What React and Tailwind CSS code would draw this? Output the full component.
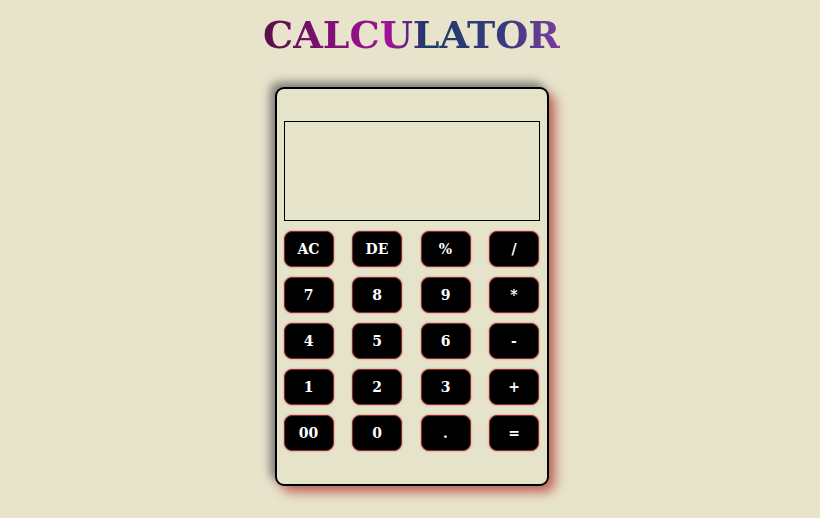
import React from "react";

const keys = ["AC","DE","%","/","7","8","9","*","4","5","6","-","1","2","3","+","00","0",".","="];

export default function App() {
  return (
    <div className="w-[820px] h-[518px] bg-[#e8e4cc] flex flex-col items-center pl-[3px]" style={{fontFamily: '"DejaVu Serif", "Liberation Serif", serif'}}>
      <h1 className="mt-[14px] text-[38px] leading-[42px] font-bold bg-[linear-gradient(to_right,#5a0f4a_0%,#a2119a_42%,#1c3a6c_55%,#3a3a80_82%,#7c3c9c_100%)] bg-clip-text text-transparent">CALCULATOR</h1>
      <div className="mt-[31px] w-[274px] h-[399px] border-2 border-black rounded-[9px] bg-[#e6e3cb] px-[7px] pt-[32px] shadow-[-5px_-5px_10px_rgba(110,110,110,0.85),6px_6px_12px_rgba(175,55,45,0.75)]">
        <div className="h-[100px] border border-black"></div>
        <div className="mt-[10px] grid grid-cols-4 gap-x-[18px] gap-y-[10px]">
          {keys.map(k => (
            <button key={k} className="h-[36px] w-[50px] rounded-[8px] bg-black text-white text-[14px] font-bold border border-[#8a2a2a] shadow-[0_0_2px_rgba(200,80,70,0.8)] flex items-center justify-center">{k}</button>
          ))}
        </div>
      </div>
    </div>
  );
}
